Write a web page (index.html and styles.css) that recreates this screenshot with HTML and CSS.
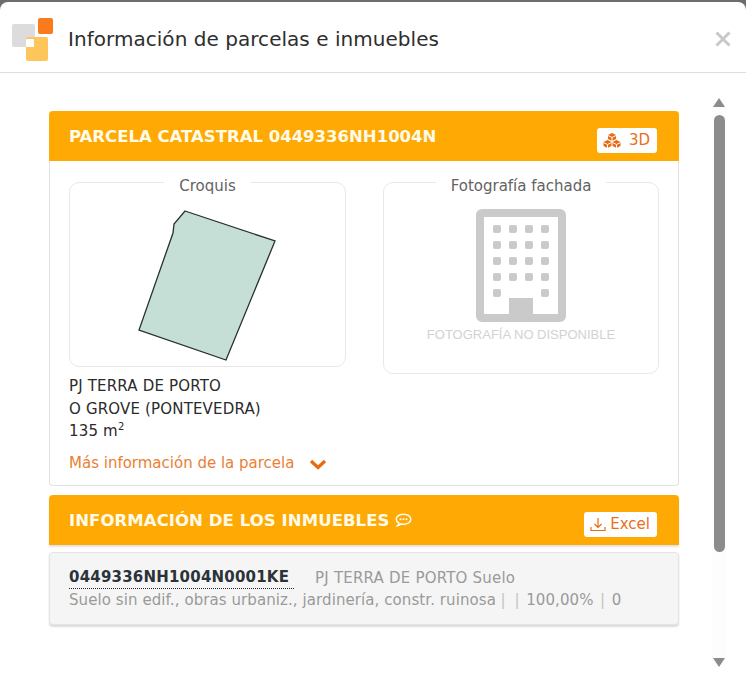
FILE: index.html
```html
<!DOCTYPE html>
<html lang="es">
<head>
    <meta charset="UTF-8">
    <meta name="viewport" content="width=device-width, initial-scale=1.0">
    <title>Información de parcelas e inmuebles</title>
    <link rel="stylesheet" href="styles.css">
</head>
<body>
    <div class="backdrop"></div>
    <div class="modal">
        <header class="modal-head">
            <svg class="logo" width="44" height="46" viewBox="0 0 44 46" xmlns="http://www.w3.org/2000/svg">
                <rect x="0" y="6" width="23" height="23" rx="2" fill="#dcdcdc"/>
                <rect x="26" y="0" width="15" height="16" rx="2" fill="#fb7a1c"/>
                <rect x="14" y="19" width="22" height="24" rx="2" fill="#fdc55a"/>
                <rect x="14" y="21" width="8" height="8" rx="1" fill="#ffffff"/>
            </svg>
            <h1 class="modal-title">Información de parcelas e inmuebles</h1>
            <svg class="close" width="16" height="16" viewBox="0 0 16 16" xmlns="http://www.w3.org/2000/svg">
                <path d="M1.5 1.5 L14.5 14.5 M14.5 1.5 L1.5 14.5" stroke="#c9c9c9" stroke-width="3"/>
            </svg>
        </header>

        <div class="modal-body">
            <main class="content">
                <section class="card">
                    <div class="band">
                        <h2 class="band-title">PARCELA CATASTRAL 0449336NH1004N</h2>
                        <a class="band-btn band-btn-3d">
                            <!-- stacked cubes -->
                            <svg width="18" height="15" viewBox="0 0 18 15" xmlns="http://www.w3.org/2000/svg">
                                <path d="M9 0 L13 2 V6 L9 8 L5 6 V2 Z M4.5 7 L8.5 9 V13 L4.5 15 L0.5 13 V9 Z M13.5 7 L17.5 9 V13 L13.5 15 L9.5 13 V9 Z" fill="#ea6a14"/>
                                <path d="M5 2.5 L9 4.5 L13 2.5 M9 4.5 V8 M0.5 9.5 L4.5 11.5 L8.5 9.5 M4.5 11.5 V15 M9.5 9.5 L13.5 11.5 L17.5 9.5 M13.5 11.5 V15" stroke="#ffffff" stroke-width="1" fill="none"/>
                            </svg>
                            3D
                        </a>
                    </div>
                    <div class="card-body">
                        <div class="col">
                            <fieldset class="frame frame-sketch">
                                <legend>Croquis</legend>
                                <svg class="sketch" width="276" height="170" viewBox="0 0 276 170" xmlns="http://www.w3.org/2000/svg">
                                    <polygon points="116,20 206,50 157,169 70,139 104,42 105,33" fill="#c5ded6" stroke="#26302c" stroke-width="1.3"/>
                                </svg>
                            </fieldset>
                            <p class="address">PJ TERRA DE PORTO<br>O GROVE (PONTEVEDRA)<br>135 m<sup>2</sup></p>
                            <a class="more">Más información de la parcela
                                <svg class="chevron" width="18" height="11" viewBox="0 0 18 11" xmlns="http://www.w3.org/2000/svg">
                                    <path d="M2 2 L9 8.5 L16 2" stroke="#ea6a14" stroke-width="3.2" fill="none"/>
                                </svg>
                            </a>
                        </div>
                        <div class="col">
                            <fieldset class="frame frame-photo">
                                <legend>Fotografía fachada</legend>
                                <svg class="building" width="90" height="113" viewBox="0 0 90 113" xmlns="http://www.w3.org/2000/svg">
                                    <rect x="4" y="4" width="82" height="105" rx="2" fill="#fff" stroke="#cacaca" stroke-width="8"/>
                                    <g fill="#cacaca">
                                        <rect x="17" y="16" width="8" height="8" rx="2"/><rect x="33" y="16" width="8" height="8" rx="2"/><rect x="49" y="16" width="8" height="8" rx="2"/><rect x="65" y="16" width="8" height="8" rx="2"/>
                                        <rect x="17" y="32" width="8" height="8" rx="2"/><rect x="33" y="32" width="8" height="8" rx="2"/><rect x="49" y="32" width="8" height="8" rx="2"/><rect x="65" y="32" width="8" height="8" rx="2"/>
                                        <rect x="17" y="48" width="8" height="8" rx="2"/><rect x="33" y="48" width="8" height="8" rx="2"/><rect x="49" y="48" width="8" height="8" rx="2"/><rect x="65" y="48" width="8" height="8" rx="2"/>
                                        <rect x="17" y="64" width="8" height="8" rx="2"/><rect x="33" y="64" width="8" height="8" rx="2"/><rect x="49" y="64" width="8" height="8" rx="2"/><rect x="65" y="64" width="8" height="8" rx="2"/>
                                        <rect x="17" y="80" width="8" height="8" rx="2"/><rect x="65" y="80" width="8" height="8" rx="2"/>
                                        <rect x="33" y="89" width="24" height="20"/>
                                    </g>
                                </svg>
                                <div class="no-photo">FOTOGRAFÍA NO DISPONIBLE</div>
                            </fieldset>
                        </div>
                    </div>
                </section>

                <section class="band band-second">
                    <h2 class="band-title">INFORMACIÓN DE LOS INMUEBLES
                        <svg class="chat" width="17" height="14" viewBox="0 0 17 14" xmlns="http://www.w3.org/2000/svg">
                            <path d="M8.5 1.2 C12.6 1.2 15.8 3.4 15.8 6.2 C15.8 9 12.6 11.2 8.5 11.2 C7.6 11.2 6.8 11.1 6 10.9 C5 11.9 3.8 12.5 2.5 12.7 C3.3 11.9 3.8 11 3.9 10 C2.2 9.1 1.2 7.7 1.2 6.2 C1.2 3.4 4.4 1.2 8.5 1.2 Z" fill="none" stroke="#fff" stroke-width="1.5"/>
                            <circle cx="5.5" cy="6.2" r="1" fill="#fff"/><circle cx="8.5" cy="6.2" r="1" fill="#fff"/><circle cx="11.5" cy="6.2" r="1" fill="#fff"/>
                        </svg>
                    </h2>
                    <a class="band-btn">
                        <svg width="16" height="15" viewBox="0 0 16 15" xmlns="http://www.w3.org/2000/svg">
                            <path d="M8 1 V10 M4.5 7 L8 10.5 L11.5 7 M1 10 V13.5 H15 V10" stroke="#ea6a14" stroke-width="1.2" fill="none"/>
                        </svg>
                        Excel
                    </a>
                </section>

                <section class="item">
                    <div class="item-top">
                        <span class="item-ref">0449336NH1004N0001KE</span>
                        <span>PJ TERRA DE PORTO Suelo</span>
                    </div>
                    <div class="item-sub">Suelo sin edif., obras urbaniz., jardinería, constr. ruinosa<span class="sep">|</span><span class="sep">|</span><span class="val">100,00%</span><span class="sep">|</span><span class="val">0</span></div>
                </section>
            </main>

            <aside class="scroller">
                <span class="arrow-up"></span>
                <span class="thumb"></span>
                <span class="arrow-down"></span>
            </aside>
        </div>
    </div>
</body>
</html>
```

FILE: styles.css
```css
html, body {
    margin: 0;
    height: 100%;
}
body {
    font-family: "DejaVu Sans", Verdana, sans-serif;
    background: #6f6c69;
    color: #2b2b2b;
    overflow: hidden;
}
.backdrop {
    height: 3px;
    background: #6f6c69;
}
.modal {
    background: white;
    border-radius: 8px 8px 0 0;
    margin-top: -1px;
    height: 687px;
}
.modal-head {
    display: flex;
    align-items: center;
    box-sizing: border-box;
    height: 71px;
    padding: 3px 14px 0 12px;
    border-bottom: 1px solid #dedede;
}
.logo {
    margin-top: 4px;
}
.modal-title {
    flex: 1;
    margin: 0 0 0 12px;
    font-size: 20px;
    font-weight: normal;
    letter-spacing: 0.04px;
    color: #2e2e2e;
}
.close {
    margin-right: 1px;
}
.modal-body {
    display: flex;
    padding: 25px 20px 0 49px;
}
.content {
    width: 630px;
    padding-top: 13px;
}
.card {
    border: 1px solid #e2e2e2;
    border-top: none;
    border-radius: 4px;
    margin-bottom: 9px;
}
.band {
    display: flex;
    justify-content: space-between;
    align-items: center;
    height: 50px;
    padding: 0 22px 0 20px;
    background: #ffa904;
    border-radius: 4px 4px 0 0;
    margin: 0 -1px;
}
.band-second {
    margin: 0;
    box-shadow: 0 2px 2px #e2e2e2;
}
.band-second .band-title {
    letter-spacing: 0.07px;
}
.band-title {
    margin: 0;
    font-size: 16.5px;
    font-weight: bold;
    color: #fffbe9;
    display: flex;
    align-items: center;
    gap: 5px;
}
.band-btn {
    display: flex;
    align-items: center;
    gap: 4px;
    height: 25px;
    padding: 0 7px 0 6px;
    margin-top: 8px;
    background: white;
    border-radius: 3px;
    font-size: 15px;
    color: #e8701c;
}
.band-btn-3d {
    gap: 8px;
}
.card-body {
    display: flex;
    gap: 38px;
    padding: 9px 19px 0;
    height: 315px;
}
.col {
    width: 276px;
}
.frame {
    margin: 0;
    padding: 0;
    width: 276px;
    box-sizing: border-box;
    border: 1px solid #e8e8e8;
    border-radius: 10px;
    text-align: center;
}
.frame legend {
    padding: 8px 15px 0;
    margin: 0 auto;
    font-size: 15px;
    line-height: 17px;
    color: #636363;
}
.frame-sketch {
    height: 197px;
}
.frame-photo {
    height: 204px;
}
.sketch {
    display: block;
    margin: -4px 0 0 -1px;
}
.building {
    display: block;
    margin: 14px auto 0;
}
.no-photo {
    margin-top: 5px;
    font-family: "Liberation Sans", Arial, sans-serif;
    font-size: 13px;
    line-height: 15px;
    color: #d2d2d2;
}
.address {
    margin: 8px 0 0;
    font-size: 15px;
    letter-spacing: 0.17px;
    line-height: 22.5px;
    color: #2b2b2b;
}
.address sup {
    font-size: 10px;
    line-height: 0;
}
.more {
    display: flex;
    align-items: center;
    gap: 15px;
    margin-top: 11px;
    font-size: 15px;
    color: #ea7f35;
}
.chevron {
    margin-top: 4px;
}
.item {
    margin-top: 7px;
    height: 73px;
    box-sizing: border-box;
    padding: 14px 19px 0;
    background: #f5f5f5;
    border: 1px solid #e4e4e4;
    border-radius: 4px;
    box-shadow: 0 2px 2px #dcdcdc;
    font-size: 15px;
    line-height: 22px;
    color: #9a9a9a;
}
.item-top {
    display: flex;
    gap: 21px;
    letter-spacing: 0.2px;
}
.item-ref {
    font-weight: bold;
    color: #2b3238;
    border-bottom: 1px dotted #222;
    line-height: 20px;
    padding-right: 5px;
}
.item-sub {
    letter-spacing: 0.08px;
}
.sep {
    margin: 0 4.5px;
    color: #c4c4c4;
}
.val {
    margin: 0 2px;
}
.scroller {
    display: flex;
    flex-direction: column;
    align-items: center;
    width: 15px;
    margin-left: 33px;
    height: 569px;
    background: #fdfdfd;
}
.arrow-up, .arrow-down {
    width: 0;
    height: 0;
    border-left: 6px solid transparent;
    border-right: 6px solid transparent;
}
.arrow-up {
    border-bottom: 9px solid #8c8c8c;
}
.arrow-down {
    margin-top: auto;
    border-top: 9px solid #8c8c8c;
}
.thumb {
    width: 11px;
    height: 437px;
    margin-top: 8px;
    background: #8c8c8c;
    border-radius: 6px;
}
```
